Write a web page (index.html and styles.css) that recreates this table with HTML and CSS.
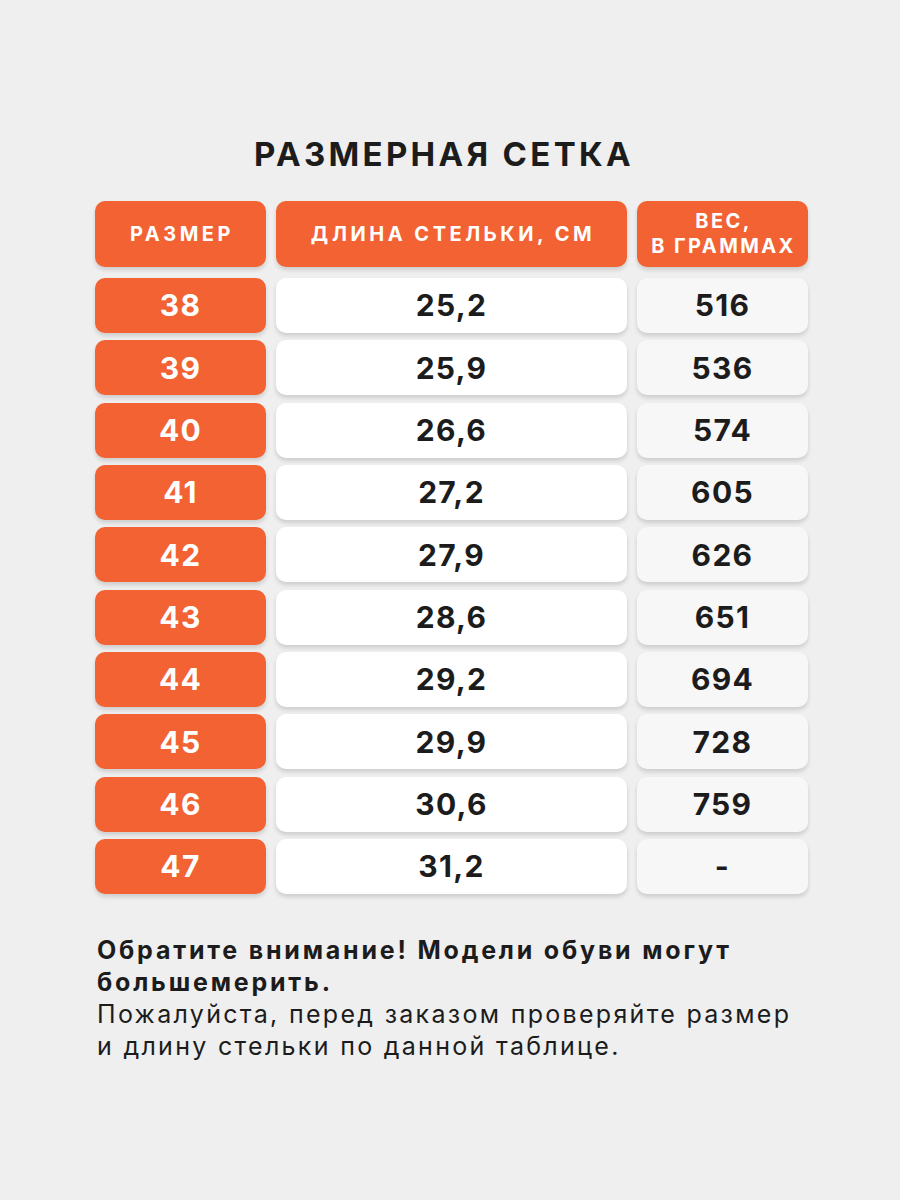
FILE: index.html
```html
<!DOCTYPE html>
<html lang="ru">
<head>
<meta charset="utf-8">
<title>Размерная сетка</title>
<link rel="stylesheet" href="styles.css">
</head>
<body>
<main class="page">
  <h1 class="title">РАЗМЕРНАЯ СЕТКА</h1>
  <div class="table">
    <div class="cell head">РАЗМЕР</div>
    <div class="cell head">ДЛИНА СТЕЛЬКИ, СМ</div>
    <div class="cell head two">ВЕС,<br>В ГРАММАХ</div>

    <div class="cell size">38</div><div class="cell len">25,2</div><div class="cell wt">516</div>
    <div class="cell size">39</div><div class="cell len">25,9</div><div class="cell wt">536</div>
    <div class="cell size">40</div><div class="cell len">26,6</div><div class="cell wt">574</div>
    <div class="cell size">41</div><div class="cell len">27,2</div><div class="cell wt">605</div>
    <div class="cell size">42</div><div class="cell len">27,9</div><div class="cell wt">626</div>
    <div class="cell size">43</div><div class="cell len">28,6</div><div class="cell wt">651</div>
    <div class="cell size">44</div><div class="cell len">29,2</div><div class="cell wt">694</div>
    <div class="cell size">45</div><div class="cell len">29,9</div><div class="cell wt">728</div>
    <div class="cell size">46</div><div class="cell len">30,6</div><div class="cell wt">759</div>
    <div class="cell size">47</div><div class="cell len">31,2</div><div class="cell wt">-</div>
  </div>
  <div class="note">
    <p class="note-bold">Обратите внимание! Модели обуви могут большемерить.</p>
    <p class="note-text">Пожалуйста, перед заказом проверяйте размер и длину стельки по данной таблице.</p>
  </div>
</main>
</body>
</html>
```

FILE: styles.css
```css
html, body {
  margin: 0;
  padding: 0;
  background: #efefef;
}
body {
  font-family: Inter, "Noto Sans", "Liberation Sans", sans-serif;
  color: #1c1c1c;
}
.page {
  width: 900px;
  height: 1200px;
  padding-top: 134px;
  box-sizing: border-box;
}
.title {
  margin: 0 0 27px;
  text-align: center;
  font-size: 33px;
  line-height: 40px;
  font-weight: 700;
  letter-spacing: 3.3px;
  padding-right: 12px;
}
.table {
  display: grid;
  grid-template-columns: 171px 351px 171px;
  grid-template-rows: 69.67px repeat(10, 55px);
  column-gap: 10px;
  row-gap: 7.33px;
  margin-left: 95px;
}
.cell {
  display: flex;
  align-items: center;
  justify-content: center;
  border-radius: 10px;
  box-shadow: 0 3px 4px rgba(0, 0, 0, 0.14);
  font-weight: 700;
  font-size: 30px;
  letter-spacing: 1.3px;
  text-align: center;
}
.head {
  background: #f26232;
  color: #fff;
  font-size: 20px;
  font-weight: 700;
  letter-spacing: 3.5px;
  line-height: 25px;
  height: 66px;
  padding-left: 3px;
}
.head.two {
  letter-spacing: 2.4px;
  padding-left: 2px;
}
.size {
  background: #f26232;
  color: #fff;
}
.len {
  background: #ffffff;
}
.wt {
  background: #f7f7f7;
}
.note {
  margin: 40px 0 0 97px;
  width: 712px;
  font-size: 25px;
  line-height: 32px;
}
.note p {
  margin: 0;
}
.note-bold {
  font-weight: 700;
  letter-spacing: 2.8px;
}
.note-text {
  font-weight: 400;
  letter-spacing: 2.3px;
  margin-top: 6px;
}
```
